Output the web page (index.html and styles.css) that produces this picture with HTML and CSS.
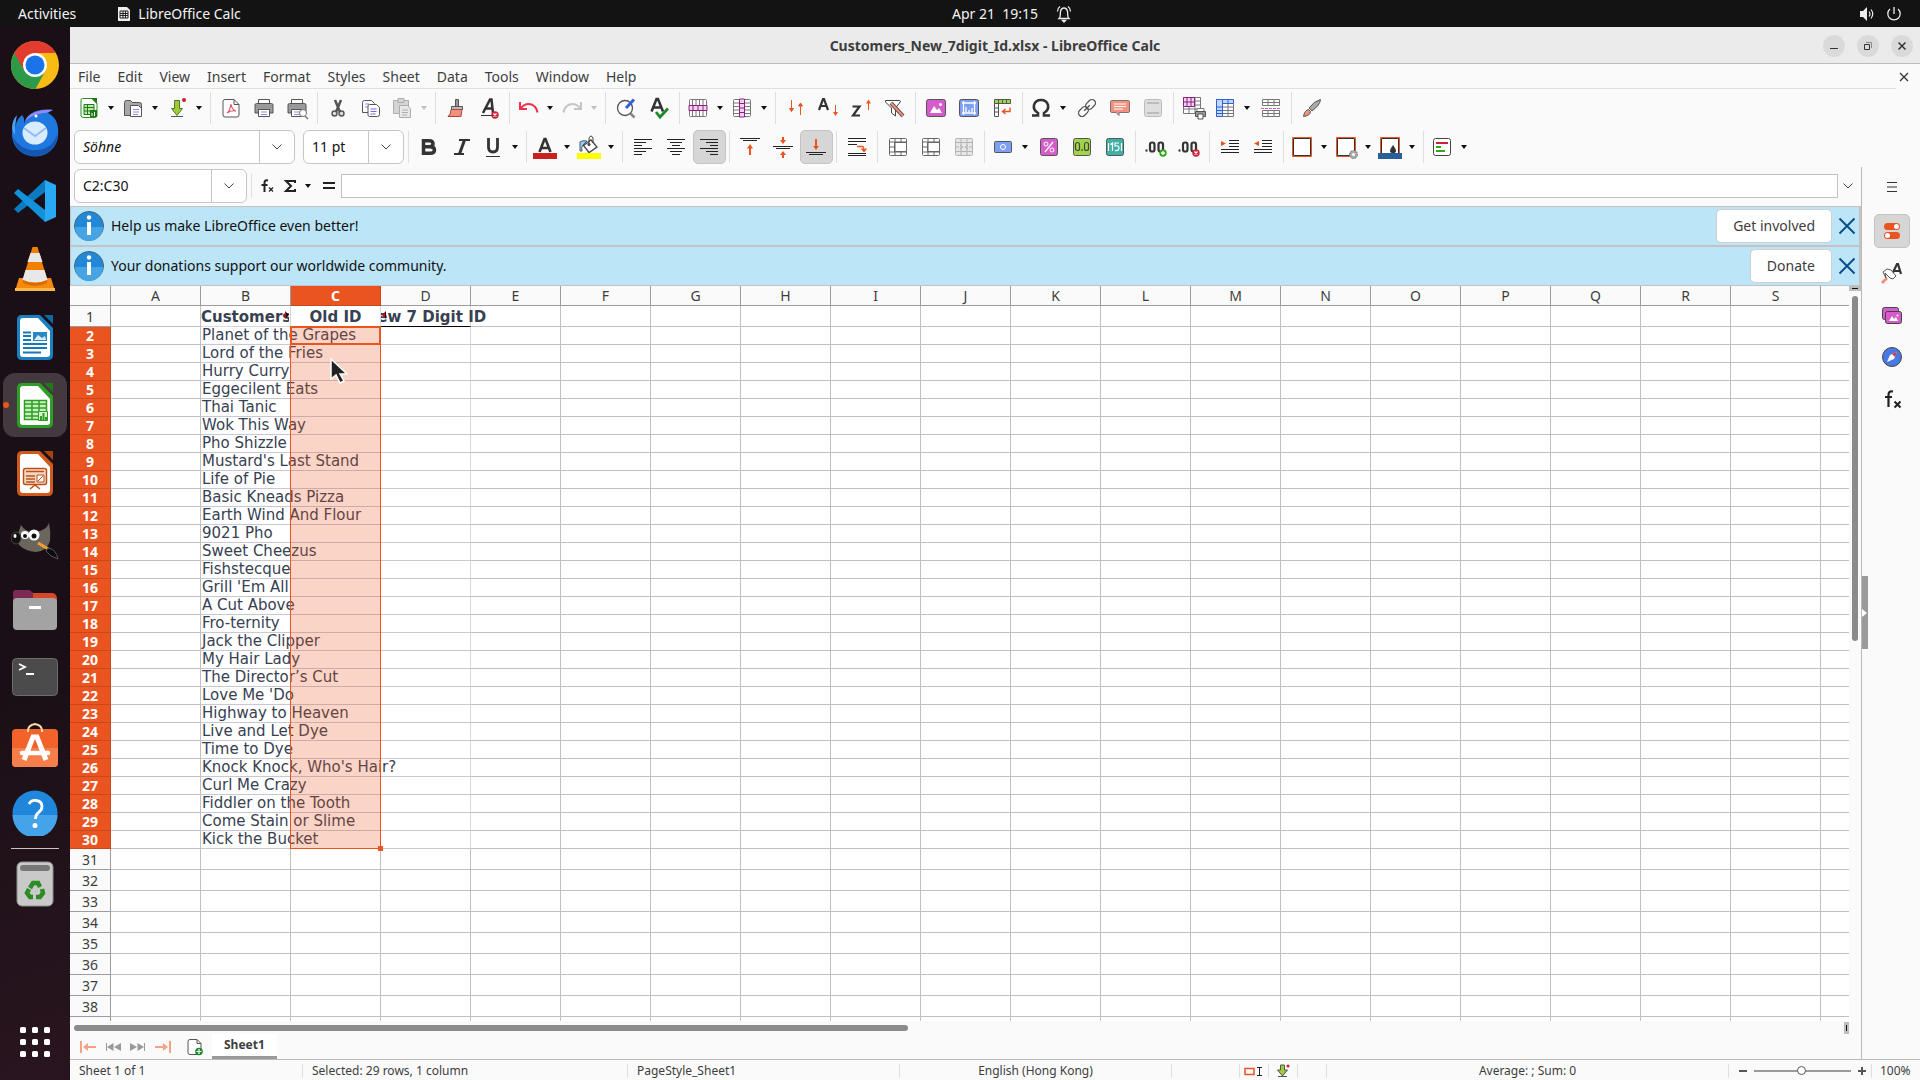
FILE: index.html
```html
<!DOCTYPE html>
<html lang="en">
<head>
    <meta charset="UTF-8">
    <meta name="viewport" content="width=device-width, initial-scale=1.0">
    <title>Customers_New_7digit_Id.xlsx - LibreOffice Calc</title>
    <link rel="stylesheet" href="styles.css">
</head>
<body>
    <!-- GNOME top bar -->
    <header class="topbar">
        <div class="topbar-left">
            <button class="plain">Activities</button>
            <button class="plain app-menu">
                <svg width="12" height="14" viewBox="0 0 12 14"><path d="M0 0h9l3 3v11H0z" fill="#eee"/><path d="M2 4h8v7H2zM2 6.500h8M2 8.500h8M5 4v7M7.500 4v7" fill="none" stroke="#222"/></svg>
                LibreOffice Calc
            </button>
        </div>
        <div class="topbar-center">
            <span>Apr 21&nbsp; 19:15</span>
            <svg width="16" height="18" viewBox="0 0 16 18" fill="none" stroke="#eee" stroke-width="1.300"><path d="M3 13.500c2-2 1-4 1.500-7C5 4 6 3 8 3s3 1 3.500 3.500c.5 3-.5 5 1.500 7zM1.500 6.500C1.500 4 2.500 2.500 4 1.500M14.500 6.500C14.500 4 13.500 2.500 12 1.500"/><path d="M6.500 15.500h3L8 17z" fill="#eee"/></svg>
        </div>
        <div class="topbar-right">
            <svg width="16" height="16" viewBox="0 0 16 16"><path d="M1 5h3l4-4v14l-4-4H1z" fill="#eee"/><path d="M10 5.500q2 2.500 0 5M12 3.500q3.500 4.500 0 9" fill="none" stroke="#eee" stroke-width="1.200"/></svg>
            <svg width="16" height="16" viewBox="0 0 16 16" fill="none" stroke="#eee" stroke-width="1.300"><path d="M4 3a6.200 6.200 0 1 0 8 0M8 1v7"/></svg>
        </div>
    </header>

    <div class="desktop">
        <!-- Dock -->
        <nav class="dock">
            <button class="dock-item" aria-label="Chrome">
                <svg width="48" height="48" viewBox="0 0 48 48"><circle cx="24" cy="24" r="24" fill="#f9bc15"/><path d="M24 24L3.200 12A24 24 0 0 0 24.500 48L34.400 30z" fill="#2c9a48"/><path d="M3.200 12A24 24 0 0 1 44.800 12H24L13.600 30z" fill="#e33b2e"/><circle cx="24" cy="24" r="12" fill="#fff"/><circle cx="24" cy="24" r="9.500" fill="#1a73e8"/></svg>
            </button>
            <button class="dock-item" aria-label="Thunderbird">
                <svg width="48" height="48" viewBox="0 0 48 48"><path d="M1 20q1 4 3 6Q3 12 11 6q3 3 2 9C16 4 26-1 42 1q-3 1-5 3c8 4 11 12 10 21a23 22 0 0 1-46 1z" fill="#1f78e0"/><path d="M2 28c6 10 14 14 24 13 10 0 18-7 20-16 1 14-10 22-22 22S3 38 2 28z" fill="#1456b0"/><path d="M14 12C18 4 28 0 42 1l-7 3c-6 0-14 2-21 8z" fill="#9a86f2"/><path d="M1 20q0-9 5-14-2 8-2 20-2-2-3-6z" fill="#4aa0f4"/><circle cx="25" cy="7" r="1.500" fill="#fff"/><ellipse cx="24" cy="24" rx="12.500" ry="11.500" fill="#d9ebff"/><path d="M13 19l11 8 11-8" fill="none" stroke="#8fbdf0" stroke-width="2"/></svg>
            </button>
            <button class="dock-item" aria-label="Visual Studio Code">
                <svg width="44" height="44" viewBox="0 0 44 44"><path d="M32 1L1 30l4 4 27-21z" fill="#0b7ac0"/><path d="M1 14l4-4 27 21v12z" fill="#1392dc"/><path d="M32 1l11 5v32l-11 5z" fill="#29a8f3"/></svg>
            </button>
            <button class="dock-item" aria-label="VLC">
                <svg width="42" height="46" viewBox="0 0 42 46"><path d="M5 32h32l4 13H1z" fill="#f58a0b"/><path d="M1 42h40v3H1z" fill="#ffb84a"/><path d="M18.500 1h5L34 36q-13 6-26 0z" fill="#f08000"/><path d="M16.500 7h9l3 9h-15zM11.500 24h19l3 10q-12 5-25 0z" fill="#e8e8e8"/><path d="M9 34q12 6 24 0v3q-12 6-24 0z" fill="#d96c00"/></svg>
            </button>
            <button class="dock-item" aria-label="LibreOffice Writer">
                <svg width="36" height="45" viewBox="0 0 36 45"><path d="M5 0h18l13 13v27q0 5-5 5H5q-5 0-5-5V5q0-5 5-5z" fill="#1b7fc0"/><path d="M27 0h9v9z" fill="#0d69a6"/><path d="M6 3h15l12 13v23q0 3-3 3H6q-3 0-3-3V6q0-3 3-3z" fill="#fff"/><path d="M6 17.500h8M6 21h8M6 25h8M6 29h24M6 33h24M6 37.500h18" stroke="#1879ba" stroke-width="2"/><path d="M16 17h14v9H16z" fill="#2b86c6"/><path d="M17 25l4-5 4 3 3-2 1 4z" fill="#d7ecf8"/></svg>
            </button>
            <button class="dock-item active" aria-label="LibreOffice Calc">
                <svg width="36" height="45" viewBox="0 0 36 45"><path d="M5 0h18l13 13v27q0 5-5 5H5q-5 0-5-5V5q0-5 5-5z" fill="#2f9e25"/><path d="M27 0h9v9z" fill="#1c7b15"/><path d="M6 3h15l12 13v23q0 3-3 3H6q-3 0-3-3V6q0-3 3-3z" fill="#fff"/><path d="M7.500 17.500h22v19h-22zM7.500 21h22M7.500 25h22M7.500 29h22M7.500 33h22M15 17v20M22 17v20" fill="#c9f0c0" stroke="#2f9e25" stroke-width="1.500"/><path d="M21.500 28.500h9v9h-9z" fill="#d8f5d0" stroke="#2f9e25"/><path d="M24 37v-4M26.500 37v-7M29 37v-3" stroke="#2f9e25" stroke-width="2"/></svg>
            </button>
            <button class="dock-item" aria-label="LibreOffice Impress">
                <svg width="36" height="45" viewBox="0 0 36 45"><path d="M5 0h18l13 13v27q0 5-5 5H5q-5 0-5-5V5q0-5 5-5z" fill="#cf5a1c"/><path d="M27 0h9v9z" fill="#a8430d"/><path d="M6 3h15l12 13v23q0 3-3 3H6q-3 0-3-3V6q0-3 3-3z" fill="#fff"/><rect x="6.500" y="17.500" width="23" height="16" rx="2" fill="#f8d8c4" stroke="#b9501a" stroke-width="1.500"/><path d="M9 25h9M9 28h9M9 31h9M9 20.500h18M13 38l5-4 5 4" fill="none" stroke="#b9501a" stroke-width="1.500"/><path d="M20 24h7v7h-7zM21 30l3-3 2-2" fill="#fff" stroke="#b9501a"/></svg>
            </button>
            <button class="dock-item" aria-label="GIMP">
                <svg width="48" height="40" viewBox="0 0 48 40"><path d="M10 4q5 8 14 7Q35 10 38 2q2 9 1 18-3 10-14 11Q14 30 8 24q-3-8 2-20z" fill="#6b665d"/><ellipse cx="5" cy="17" rx="5" ry="6" fill="#111" stroke="#444"/><ellipse cx="4" cy="15" rx="1.500" ry="2" fill="#fff"/><circle cx="14" cy="14" r="4" fill="#fff"/><circle cx="23" cy="14" r="5.500" fill="#fff"/><circle cx="14" cy="15" r="2" fill="#111"/><circle cx="23" cy="15" r="2.500" fill="#111"/><path d="M27 22l12 7" stroke="#f0a030" stroke-width="3"/><path d="M37 27q8 1 10 11-8-2-12-8z" fill="#0c0c0c" stroke="#555"/></svg>
            </button>
            <button class="dock-item" aria-label="Files">
                <svg width="46" height="42" viewBox="0 0 46 42"><path d="M1 6q0-4 4-4h12l4 3h19q4 0 5 5v6H1z" fill="#d6482b"/><path d="M1 6q0-4 4-4h12l4 3v8H1z" fill="#7c2a55"/><rect x="1" y="10" width="44" height="32" rx="4" fill="#a3a3a3"/><path d="M17 19.500h12" stroke="#fff" stroke-width="3"/></svg>
            </button>
            <button class="dock-item" aria-label="Terminal">
                <svg width="46" height="38" viewBox="0 0 46 38"><rect x=".5" y=".5" width="45" height="37" rx="4" fill="#4b4b4b" stroke="#6d6d6d"/><path d="M7 6l6 3-6 3M14 16h8" fill="none" stroke="#fff" stroke-width="1.800"/></svg>
            </button>
            <button class="dock-item" aria-label="Ubuntu Software">
                <svg width="46" height="44" viewBox="0 0 46 44"><rect y="6" width="46" height="38" rx="4" fill="#f2632c"/><path d="M0 25h46v15q0 4-4 4H4q-4 0-4-4z" fill="#f47f4b"/><path d="M16 9V8q0-6 7-7 7 1 7 7v1" fill="none" stroke="#f8d9a8" stroke-width="2"/><path d="M12 37l9-23h4l9 23" fill="none" stroke="#fff" stroke-width="5"/><path d="M10 30h26" stroke="#fff" stroke-width="4.500" stroke-linecap="round"/></svg>
            </button>
            <button class="dock-item" aria-label="Help">
                <svg width="46" height="46" viewBox="0 0 46 46"><circle cx="23" cy="23" r="22.500" fill="#1f86dc"/><path d="M.5 25h45A22.500 22.500 0 0 1 .5 25z" fill="#45a3ea"/><path d="M17 14q2-4 7-3.500 6 .5 6 6 0 3.500-3.500 6-3 2-3 6.500" fill="none" stroke="#fff" stroke-width="2.800"/><circle cx="23" cy="35.500" r="2.500" fill="#fff"/></svg>
            </button>
            <hr class="dock-sep">
            <button class="dock-item" aria-label="Trash">
                <svg width="38" height="46" viewBox="0 0 38 46"><rect x="1" y="1" width="36" height="44" rx="5" fill="#c9c9c9" stroke="#8d8d8d"/><rect x="4" y="4" width="30" height="6" rx="3" fill="#777"/><g fill="none" stroke="#2a8c22" stroke-width="4.500"><path d="M14 27l3-5h5l2 4"/><path d="M26 28l1 4-3 4h-4"/><path d="M17 36h-3l-3-4 2-4"/></g></svg>
            </button>
            <button class="dock-item apps" aria-label="Show Applications">
                <svg width="30" height="30" viewBox="0 0 30 30" fill="#fff"><rect width="6" height="6" rx="1.500"/><rect x="12" width="6" height="6" rx="1.500"/><rect x="24" width="6" height="6" rx="1.500"/><rect y="12" width="6" height="6" rx="1.500"/><rect x="12" y="12" width="6" height="6" rx="1.500"/><rect x="24" y="12" width="6" height="6" rx="1.500"/><rect y="24" width="6" height="6" rx="1.500"/><rect x="12" y="24" width="6" height="6" rx="1.500"/><rect x="24" y="24" width="6" height="6" rx="1.500"/></svg>
            </button>
        </nav>

        <div class="window">
            <div class="titlebar">
                <h1>Customers_New_7digit_Id.xlsx - LibreOffice Calc</h1>
                <div class="window-buttons">
                    <button aria-label="Minimize"><svg width="10" height="10" viewBox="0 0 10 10"><path d="M1 7.500h8" stroke="#333"/></svg></button>
                    <button aria-label="Restore"><svg width="10" height="10" viewBox="0 0 10 10" fill="none"><path d="M3 1.500h5.500V7" stroke="#888"/><path d="M1.500 3.500h5v5h-5z" stroke="#333"/></svg></button>
                    <button aria-label="Close"><svg width="10" height="10" viewBox="0 0 10 10"><path d="M1.500 1.500l7 7M8.500 1.500l-7 7" stroke="#333" stroke-width="1.500"/></svg></button>
                </div>
            </div>

            <div class="menubar">
                <nav class="menus">
                    <button>File</button><button>Edit</button><button>View</button><button>Insert</button><button>Format</button><button>Styles</button><button>Sheet</button><button>Data</button><button>Tools</button><button>Window</button><button>Help</button>
                </nav>
                <button class="doc-close" aria-label="Close document"><svg width="10" height="10" viewBox="0 0 10 10"><path d="M1 1l8 8M9 1l-8 8" stroke="#333" stroke-width="1.300"/></svg></button>
            </div>

            <!-- Standard toolbar -->
            <div class="toolbar">
                <div class="split"><button aria-label="New"><svg viewBox="0 0 24 24"><path d="M5.500 2.500H15l5 5v12q0 2-2 2H7q-3 0-3-2v-15q0-2 1.500-2z" fill="#fff" stroke="#2c8c22"/><path d="M14 2h6v6z" fill="#1e7b16"/><path d="M7 8.500h10v10H7zM7 11.500h10M7 15h10M10.500 8v10" fill="#b8e8a8" stroke="#1e7b16"/><path d="M13 14h7v7h-7z" fill="#1e7b16"/><path d="M15 20v-3M17.500 20v-4" stroke="#fff"/></svg></button><button class="drop" aria-label="New options"></button></div>
                <div class="split"><button aria-label="Open"><svg viewBox="0 0 24 24"><path d="M3.500 19.500v-13q0-2 2-2h4l2 2h7q2 0 2 2v11z" fill="#a8a8a8" stroke="#555"/><path d="M9.500 9.500h8l3 3v8h-11z" fill="#fff" stroke="#555"/><path d="M12 13.500h6M12 16h6M12 18.500h5" stroke="#8d8de0"/></svg></button><button class="drop" aria-label="Open options"></button></div>
                <div class="split"><button aria-label="Save"><svg viewBox="0 0 24 24"><path d="M9.500 4.500h5v8h3l-5.500 7-5.500-7h3z" fill="#9ccc3c" stroke="#557722"/><path d="M6 20.500h12" stroke="#555"/><circle cx="19" cy="4" r="2" fill="#d01c2e"/></svg></button><button class="drop" aria-label="Save options"></button></div>
                <i class="sep"></i>
                <button aria-label="Export as PDF"><svg viewBox="0 0 24 24"><path d="M6 3.500h9l5 5v10.500q0 2-2 2H6q-2 0-2-2v-13.500q0-2 2-2zM15 3.500v5h5" fill="#fff" stroke="#555"/><path d="M8 17q3-2 4-9 1 6 5 7-5-1-9 2z" fill="none" stroke="#e2536a" stroke-width="1.200"/></svg></button>
                <button aria-label="Print"><svg viewBox="0 0 24 24"><path d="M6.500 8V3.500h11V8" fill="#fff" stroke="#555"/><path d="M3 9q0-1.500 1.500-1.500h15q1.500 0 1.500 1.500v8H3z" fill="#9a9a9a" stroke="#555"/><path d="M6.500 13.500h11v7h-11z" fill="#fff" stroke="#555"/><path d="M9 16h6M9 18.500h6" stroke="#8d8de0"/></svg></button>
                <button aria-label="Print Preview"><svg viewBox="0 0 24 24"><path d="M6.500 8V3.500h11V8" fill="#fff" stroke="#555"/><path d="M3 9q0-1.500 1.500-1.500h15q1.500 0 1.500 1.500v8H3z" fill="#9a9a9a" stroke="#555"/><path d="M6.500 13.500h11v7h-11z" fill="#fff" stroke="#555"/><path d="M9 16h6M9 18.500h6" stroke="#8d8de0"/><circle cx="18" cy="17" r="3.500" fill="#fff" stroke="#777"/><path d="M20 20l3 3" stroke="#777" stroke-width="1.500"/></svg></button>
                <i class="sep"></i>
                <button aria-label="Cut"><svg viewBox="0 0 24 24" fill="none" stroke="#555" stroke-width="1.400"><path d="M9 4l5 12M15 4l-5 12" stroke-width="2.500"/><circle cx="8.500" cy="17.500" r="2.500" fill="#ddd"/><circle cx="15.500" cy="17.500" r="2.500" fill="#ddd"/></svg></button>
                <button aria-label="Copy"><svg viewBox="0 0 24 24"><path d="M5.500 4.500h7l3 3v9h-12v-10q0-2 2-2z" fill="#fff" stroke="#555"/><path d="M6 8h4M6 11h3" stroke="#8d8de0"/><path d="M10.500 8.500h7l3 3v7q0 2-2 2h-8q-1.500 0-1.500-2v-8.500q0-1.500 1.500-1.500z" fill="#fff" stroke="#555"/><path d="M11.500 13h6M11.500 15.500h6M11.500 18h5" stroke="#6f6fe0"/></svg></button>
                <div class="split"><button aria-label="Paste"><svg viewBox="0 0 24 24" fill="#d4d4d4" stroke="#adadad"><path d="M3.500 4.500h15v13h-15z"/><path d="M8 2.500h6v4H8z"/><path d="M9.500 9.500h8l3 3v9h-11z" fill="#e8e8e8"/><path d="M12 14h6M12 16.500h6M12 19h5"/></svg></button><button class="drop off" aria-label="Paste options"></button></div>
                <i class="sep"></i>
                <button aria-label="Clone Formatting"><svg viewBox="0 0 24 24"><path d="M11.500 3.500h3v7h-3z" fill="#999" stroke="#555"/><path d="M7.500 10.500h11v3h-11z" fill="#bbb" stroke="#555"/><path d="M7 13.500h11l-1 7H4q3-2 3-7z" fill="#f4907e" stroke="#a34b3d"/></svg></button>
                <button aria-label="Clear Direct Formatting"><svg viewBox="0 0 24 24"><path d="M6 17L13 3.500h1.500L16 17M8 12.500h8" fill="none" stroke="#333" stroke-width="2.500"/><path d="M4 19.500h12" stroke="#333"/><circle cx="18" cy="19" r="3.700" fill="#c9233c"/><path d="M16.500 17.500l3 3M19.500 17.500l-3 3" stroke="#fff" stroke-width="1.200"/></svg></button>
                <i class="sep"></i>
                <div class="split"><button aria-label="Undo"><svg viewBox="0 0 24 24" fill="none" stroke="#f0304c" stroke-width="2"><path d="M4 6v7h7M4.500 12.500q5-6 11-4 5 2 6 8"/></svg></button><button class="drop" aria-label="Undo history"></button></div>
                <div class="split"><button aria-label="Redo"><svg viewBox="0 0 24 24" fill="none" stroke="#c4c4c4" stroke-width="2"><path d="M21 6v7h-7M20.500 12.500q-5-6-11-4-5 2-6 8"/></svg></button><button class="drop off" aria-label="Redo history"></button></div>
                <i class="sep"></i>
                <button aria-label="Find and Replace"><svg viewBox="0 0 24 24"><circle cx="11" cy="12" r="7.500" fill="#fff" stroke="#555" stroke-width="1.300"/><path d="M16.500 17.500l4 4" stroke="#888" stroke-width="2.500"/><path d="M12 12l8-8.500" stroke="#2f62d8" stroke-width="3"/></svg></button>
                <button aria-label="Spelling"><svg viewBox="0 0 24 24" fill="none"><path d="M4.500 15.500L9.500 3h1.500l5 12.500M6.500 11.500h8" stroke="#333" stroke-width="2.500"/><path d="M9 16l4 5 8-8.500" stroke="#1c8a2a" stroke-width="2.800"/></svg></button>
                <i class="sep"></i>
                <div class="split"><button aria-label="Row"><svg viewBox="0 0 24 24" fill="#fff" stroke="#777"><rect x="3.500" y="3.500" width="17" height="17" rx="1"/><path d="M6.500 3v18M10 3v18M13.500 3v18M17 3v18"/><path d="M3 9.500h18v5H3z" fill="#f4d0f0" stroke="#8b2080"/><path d="M7 9v6M12 9v6M17 9v6" stroke="#8b2080"/></svg></button><button class="drop" aria-label="Row options"></button></div>
                <div class="split"><button aria-label="Column"><svg viewBox="0 0 24 24" fill="#fff" stroke="#777"><rect x="3.500" y="3.500" width="17" height="17" rx="1"/><path d="M3 7h18M3 10.500h18M3 14h18M3 17.500h18"/><path d="M9.500 3h5v18h-5z" fill="#f4d0f0" stroke="#8b2080"/><path d="M9 7.500h6M9 12h6M9 16.500h6" stroke="#8b2080"/></svg></button><button class="drop" aria-label="Column options"></button></div>
                <i class="sep"></i>
                <button aria-label="Sort"><svg viewBox="0 0 24 24" fill="#e95420" stroke="#e95420"><path d="M7.500 4v10M16.500 9v10"/><path d="M5.500 12.500h4l-2 3zM14.500 10h4l-2-3z"/></svg></button>
                <button aria-label="Sort Ascending"><svg viewBox="0 0 24 24" fill="none"><path d="M2 14L6 3h1l4 11M3.500 10h6" stroke="#333" stroke-width="2.200"/><path d="M18.500 9v9" stroke="#e95420"/><path d="M16 16h5l-2.500 4z" fill="#e95420"/></svg></button>
                <button aria-label="Sort Descending"><svg viewBox="0 0 24 24" fill="none"><path d="M2.500 10.500h7l-6.500 9h7" stroke="#333" stroke-width="2.200"/><path d="M18.500 6v8" stroke="#e95420"/><path d="M16 7.500h5l-2.500-4z" fill="#e95420"/></svg></button>
                <button aria-label="AutoFilter"><svg viewBox="0 0 24 24" fill="#fff" stroke="#444"><path d="M2.500 4.500h14q2 0 0 2.500l-4 5v8l-4-3v-5l-6-6z"/><path d="M8 7l12 13" stroke="#444" stroke-width="4"/><path d="M8 7l12 13" stroke="#f4907e" stroke-width="2"/></svg></button>
                <i class="sep"></i>
                <button aria-label="Image"><svg viewBox="0 0 24 24"><rect x="2.500" y="3.500" width="19" height="17" rx="2" fill="#d65bcb" stroke="#555"/><path d="M6 17l4-7 3 4 2-2 3 5z" fill="#fff"/><circle cx="16.500" cy="8.500" r="1.500" fill="#fff"/></svg></button>
                <button aria-label="Chart"><svg viewBox="0 0 24 24"><rect x="2.500" y="3.500" width="19" height="17" rx="2" fill="#7ba0f5" stroke="#555"/><path d="M5 7h14M5 17h14M6.500 5v14M17.500 5v14M9 16v-5M12 16v-2M15 16v-4" stroke="#fff" stroke-width="1.300"/></svg></button>
                <button aria-label="Pivot Table"><svg viewBox="0 0 24 24"><path d="M4.500 3.500h16v4h-16z" fill="#a2d44a" stroke="#555"/><path d="M8.500 3v5M12.500 3v5M16.500 3v5M4.500 7.500h4v13h-4zM4.500 12h4M4.500 16h4" fill="none" stroke="#555"/><path d="M13 15.500h7v-4M15.500 13l-3 2.500 3 2.500" fill="none" stroke="#e95420" stroke-width="1.400"/></svg></button>
                <i class="sep"></i>
                <div class="split"><button aria-label="Special Character"><svg viewBox="0 0 24 24" fill="none" stroke="#333" stroke-width="2.600"><path d="M3 19.500h6v-2.500Q4 14 5 9q1.500-5 7-5t7 5q1 5-4 8v2.500h6"/></svg></button><button class="drop" aria-label="Special characters"></button></div>
                <button aria-label="Hyperlink"><svg viewBox="0 0 24 24" fill="none" stroke="#555" stroke-width="1.300"><g transform="rotate(-45 12 12)"><rect x="1.500" y="8.500" width="11" height="7" rx="3.500"/><rect x="11.500" y="8.500" width="11" height="7" rx="3.500"/><path d="M8 12h8"/></g></svg></button>
                <button aria-label="Comment"><svg viewBox="0 0 24 24"><path d="M4 4.500h16q1.500 0 1.500 1.500v9q0 1.500-1.500 1.500h-9v3l-3-3H4q-1.500 0-1.500-1.500V6q0-1.500 1.500-1.500z" fill="#f4907e" stroke="#777"/><path d="M6 8h12M6 10.500h12M6 13h9" stroke="#fff"/></svg></button>
                <button aria-label="Headers and Footers"><svg viewBox="0 0 24 24"><rect x="3.500" y="3.500" width="17" height="17" rx="2" fill="#dedede" stroke="#bcbcbc"/><path d="M6 7h12M6 17h12" stroke="#bcbcbc" stroke-width="2"/></svg></button>
                <i class="sep"></i>
                <button aria-label="Define Print Area"><svg viewBox="0 0 24 24" fill="#fff" stroke="#777"><path d="M1.500 1.500h17v16h-17zM1.500 13h17M13 1v16M7 1v16M13 5h6M13 9h6"/><path d="M1.500 1.500h11v9h-11zM1.500 6h11M5 1.500v9M9 1.500v9" fill="#f4d0f0" stroke="#8b2080"/><path d="M15 12.500h7v3h-7z"/><path d="M13.500 15.500h10v5h-10z" fill="#999" stroke="#555"/><path d="M16 18h5v5h-5z" stroke="#555"/></svg></button>
                <div class="split"><button aria-label="Freeze Rows and Columns"><svg viewBox="0 0 24 24" fill="#fff" stroke="#777"><path d="M3.500 3.500h17v17h-17zM3 11h18M3 14.500h18M3 17.500h18M15 3v18"/><path d="M3.500 3.500h17v4h-11v13h-6zM3.500 11h6M3.500 14.500h6M3.500 17.500h6M9.500 3v5M15 3v4" fill="#c4d6fa" stroke="#2f62d8"/></svg></button><button class="drop" aria-label="Freeze options"></button></div>
                <button aria-label="Split Window"><svg viewBox="0 0 24 24" fill="#fff" stroke="#777"><path d="M3.500 3.500h17v6h-17zM3.500 14.500h17v6h-17zM3 6.500h18M3 17.500h18M9 3v6M15 3v6M9 15v6M15 15v6"/><path d="M2 12.500h20" stroke="#d65bcb" stroke-dasharray="3 1"/></svg></button>
                <i class="sep"></i>
                <button aria-label="Show Draw Functions"><svg viewBox="0 0 24 24"><path d="M9 12Q14 5 20.500 3.500 20 9 12 15z" fill="#aaa" stroke="#555"/><path d="M3.500 20.500q1-6 5-7l2 2q0 4-7 5z" fill="#f4907e" stroke="#555"/></svg></button>
            </div>

            <!-- Formatting toolbar -->
            <div class="toolbar">
                <div class="combo font-name"><input type="text" value="Söhne" aria-label="Font Name"><button class="chevron" aria-label="Font list"><svg width="12" height="8" viewBox="0 0 12 8"><path d="M1.500 1.500L6 6l4.500-4.500" fill="none" stroke="#444"/></svg></button></div>
                <div class="combo font-size"><input type="text" value="11 pt" aria-label="Font Size"><button class="chevron" aria-label="Size list"><svg width="12" height="8" viewBox="0 0 12 8"><path d="M1.500 1.500L6 6l4.500-4.500" fill="none" stroke="#444"/></svg></button></div>
                <i class="sep"></i>
                <button aria-label="Bold"><svg viewBox="0 0 24 24" fill="none" stroke="#333" stroke-width="3.500"><path d="M7 5.700h5q4 0 4 3t-4 3H7M7 11.700h6q4.500 0 4.500 3.300t-4.500 3.300H7M6.500 4v16"/></svg></button>
                <button aria-label="Italic"><svg viewBox="0 0 24 24" fill="none" stroke="#333" stroke-width="2"><path d="M9 5h11M4 19h10"/><path d="M14.500 5l-5 14" stroke-width="3"/></svg></button>
                <div class="split"><button aria-label="Underline"><svg viewBox="0 0 24 24" fill="none" stroke="#333"><path d="M7.500 3v9q0 5 4.500 5t4.500-5V3" stroke-width="2.800"/><path d="M5 21.500h14"/></svg></button><button class="drop" aria-label="Underline styles"></button></div>
                <i class="sep"></i>
                <div class="split"><button aria-label="Font Color"><svg viewBox="0 0 24 24"><path d="M6.500 17L11.500 4h1l5 13M8.500 13h7" fill="none" stroke="#333" stroke-width="2.600"/><path d="M0 18h24v6H0z" fill="#c9211e"/></svg></button><button class="drop" aria-label="Font colors"></button></div>
                <div class="split"><button aria-label="Highlighting"><svg viewBox="0 0 24 24"><path d="M3 16V7q2-2 7-1l-4 4q-2 2-1 6z" fill="#8fd0ec" stroke="#557"/><path d="M6.500 10.500L14 5l6 7-8 5.500z" fill="#fff" stroke="#444" stroke-width="1.300"/><path d="M12 10V3q2-4 4 0v5" fill="none" stroke="#444"/><circle cx="12" cy="9.500" r="1.500" fill="#444"/><path d="M0 18h24v6H0z" fill="#ff0"/></svg></button><button class="drop" aria-label="Highlight colors"></button></div>
                <i class="sep"></i>
                <button aria-label="Align Left"><svg viewBox="0 0 24 24" stroke="#222"><path d="M3 4.500h18M3 7.500h12M3 10.500h8M3 13.500h18M3 16.500h12M3 19.500h8"/></svg></button>
                <button aria-label="Center"><svg viewBox="0 0 24 24" stroke="#222"><path d="M3 4.500h18M6 7.500h12M8 10.500h8M3 13.500h18M6 16.500h12M8 19.500h8"/></svg></button>
                <button class="on" aria-label="Align Right"><svg viewBox="0 0 24 24" stroke="#222"><path d="M3 4.500h18M9 7.500h12M13 10.500h8M3 13.500h18M9 16.500h12M13 19.500h8"/></svg></button>
                <i class="sep"></i>
                <button aria-label="Align Top"><svg viewBox="0 0 24 24"><path d="M2 3.500h20M5 5.500h14" stroke="#222"/><path d="M12 12v8" stroke="#e95420" stroke-width="2"/><path d="M9 13.500h6L12 9z" fill="#e95420"/></svg></button>
                <button aria-label="Center Vertically"><svg viewBox="0 0 24 24"><path d="M2 11.500h20M5 13.500h14" stroke="#222"/><path d="M12 2v4M12 19v4" stroke="#e95420" stroke-width="2"/><path d="M9 5h6l-3 4zM9 20h6l-3-4z" fill="#e95420"/></svg></button>
                <button class="on" aria-label="Align Bottom"><svg viewBox="0 0 24 24"><path d="M2 17.500h20M5 19.500h14" stroke="#222"/><path d="M12 4v8" stroke="#e95420" stroke-width="2"/><path d="M9 11h6l-3 4z" fill="#e95420"/></svg></button>
                <i class="sep"></i>
                <button aria-label="Wrap Text"><svg viewBox="0 0 24 24" fill="none" stroke="#222"><path d="M3 3.500h18M3 6.500h18M3 9.500h9M3 18.500h18M3 20.500h18"/><path d="M12 11.500h5q2 0 2 4M16.500 13.500l2.500 3 2.500-3" stroke="#e95420" stroke-width="1.300"/></svg></button>
                <i class="sep"></i>
                <button aria-label="Merge and Center Cells"><svg viewBox="0 0 24 24" fill="#fff" stroke="#666"><rect x="3.500" y="3.500" width="17" height="17" rx="1"/><path d="M9 3v18M15 3v4M15 17v4M3 7h18M3 17h18M3 12h6M8.500 7.500h12v9h-12z"/></svg></button>
                <button aria-label="Merge Cells"><svg viewBox="0 0 24 24" fill="#fff" stroke="#666"><rect x="3.500" y="3.500" width="17" height="17" rx="1"/><path d="M9 3v18M15 3v4M15 17v4M3 7h18M3 17h18M3 12h6M8.500 7.500h12v9h-12z"/></svg></button>
                <button aria-label="Split Cells"><svg viewBox="0 0 24 24" fill="#e6e6e6" stroke="#b4b4b4"><rect x="3.500" y="3.500" width="17" height="17" rx="1"/><path d="M9 3v18M15 3v18M3 7.500h18M3 16.500h18M3 12h4M17 12h4M8 10l3 2-3 2M16 10l-3 2 3 2"/></svg></button>
                <i class="sep"></i>
                <div class="split"><button aria-label="Currency"><svg viewBox="0 0 24 24"><rect x="3.500" y="6.500" width="17" height="11" rx="1" fill="#7ba0f5" stroke="#555"/><circle cx="12" cy="12" r="2.500" fill="none" stroke="#fff"/></svg></button><button class="drop" aria-label="Currency formats"></button></div>
                <button aria-label="Percent"><svg viewBox="0 0 24 24"><rect x="3.500" y="3.500" width="17" height="17" rx="2" fill="#d65bcb" stroke="#555"/><path d="M16 7L8 17" stroke="#fff" stroke-width="1.300"/><circle cx="9" cy="9" r="2" fill="none" stroke="#fff"/><circle cx="15" cy="15" r="2" fill="none" stroke="#fff"/></svg></button>
                <button aria-label="Number"><svg viewBox="0 0 24 24"><rect x="3.500" y="3.500" width="17" height="17" rx="2" fill="#a2d44a" stroke="#555"/><g fill="none" stroke="#444" stroke-width="1.200"><rect x="5.500" y="7.500" width="4" height="8" rx="2"/><rect x="14.500" y="7.500" width="4" height="8" rx="2"/><path d="M12 14v2"/></g></svg></button>
                <button aria-label="Date"><svg viewBox="0 0 24 24"><rect x="3.500" y="3.500" width="17" height="17" rx="2" fill="#3fb0a6" stroke="#555"/><path d="M5.500 8v8M7.500 9.500l2-1.500v8M16 8h-4v3q4-1 4 2t-4 2.500M18.500 8v8" fill="none" stroke="#fff" stroke-width="1.200"/></svg></button>
                <i class="sep"></i>
                <button aria-label="Add Decimal Place"><svg viewBox="0 0 24 24"><g fill="none" stroke="#333" stroke-width="2.200"><rect x="6" y="7.500" width="4.500" height="9" rx="2"/><rect x="14.500" y="7.500" width="4.500" height="9" rx="2"/><path d="M1.500 15.500h2"/></g><circle cx="19" cy="18" r="3.700" fill="#35a51c"/><path d="M17 18h4M19 16v4" stroke="#fff" stroke-width="1.300"/></svg></button>
                <button aria-label="Delete Decimal Place"><svg viewBox="0 0 24 24"><g fill="none" stroke="#333" stroke-width="2.200"><rect x="6" y="7.500" width="4.500" height="9" rx="2"/><rect x="14.500" y="7.500" width="4.500" height="9" rx="2"/><path d="M1.500 15.500h2"/></g><circle cx="19" cy="18" r="3.700" fill="#c9233c"/><path d="M17.500 16.500l3 3M20.500 16.500l-3 3" stroke="#fff" stroke-width="1.200"/></svg></button>
                <i class="sep"></i>
                <button aria-label="Increase Indent"><svg viewBox="0 0 24 24" stroke="#222"><path d="M11 5.500h10M11 8.500h10M11 11.500h10M3 14.500h18M3 17.500h18"/><path d="M3 6v5l5-2.500z" fill="#e95420" stroke="none"/></svg></button>
                <button aria-label="Decrease Indent"><svg viewBox="0 0 24 24" stroke="#222"><path d="M11 5.500h10M11 8.500h10M11 11.500h10M3 14.500h18M3 17.500h18"/><path d="M8 6v5L3 8.500z" fill="#e95420" stroke="none"/></svg></button>
                <i class="sep"></i>
                <div class="split"><button aria-label="Borders"><svg viewBox="0 0 24 24" fill="#fff"><path d="M2.500 2.500h19v19h-19z" stroke="#e95420"/><path d="M3.500 3.500h17v17h-17z" stroke="#333"/></svg></button><button class="drop" aria-label="Border types"></button></div>
                <div class="split"><button aria-label="Border Style"><svg viewBox="0 0 24 24" fill="#fff"><path d="M2.500 2.500h19v19h-19z" stroke="#e95420"/><path d="M3.500 3.500h17v17h-17z" stroke="#333"/><circle cx="19.500" cy="19.500" r="4" fill="#aaa"/><circle cx="19.500" cy="19.500" r="4" fill="none" stroke="#777" stroke-dasharray="2 1"/><circle cx="19.500" cy="19.500" r="1.500"/></svg></button><button class="drop" aria-label="Border styles"></button></div>
                <div class="split"><button aria-label="Border Color"><svg viewBox="0 0 24 24" fill="#fff"><path d="M2.500 2.500h19v19h-19z" stroke="#e95420"/><path d="M3.500 3.500h17v17h-17z" stroke="#333"/><path d="M15 10q6 8 0 8t0-8z" fill="#333"/><path d="M0 18h24v6H0z" fill="#2a6099"/></svg></button><button class="drop" aria-label="Border colors"></button></div>
                <i class="sep"></i>
                <div class="split"><button aria-label="Conditional"><svg viewBox="0 0 24 24"><rect x="3.500" y="3.500" width="17" height="17" rx="2" fill="#fff" stroke="#444"/><path d="M6 8h12" stroke="#c9233c" stroke-width="2"/><path d="M6 12h5M6 16h9" stroke="#35a51c" stroke-width="2"/></svg></button><button class="drop" aria-label="Conditional formats"></button></div>
            </div>

            <div class="workspace">
                <main class="document">
                    <div class="formula-bar">
                        <div class="combo name-box"><input type="text" value="C2:C30" aria-label="Name Box"><button class="chevron" aria-label="Manage names"><svg width="12" height="8" viewBox="0 0 12 8"><path d="M1.500 1.500L6 6l4.500-4.500" fill="none" stroke="#444"/></svg></button></div>
                        <i class="sep"></i>
                        <button class="fx" aria-label="Function Wizard"><svg viewBox="0 0 24 24" fill="none" stroke="#222"><path d="M12 6.500Q8.500 5.500 8.500 9v9M5.500 11h6" stroke-width="2"/><path d="M13 13.500l4 4M17 13.500l-4 4" stroke-width="1.300"/></svg></button>
                        <div class="split sum"><button aria-label="Select Function"><svg viewBox="0 0 24 24" fill="none" stroke="#222" stroke-width="2"><path d="M17 9V7H8l5 5-5 5h9v-2"/></svg></button><button class="drop" aria-label="Functions"></button></div>
                        <button class="equals" aria-label="Formula"><svg viewBox="0 0 24 24" stroke="#222" stroke-width="2"><path d="M6 9h12M6 14h12"/></svg></button>
                        <input type="text" class="formula-input" aria-label="Input line">
                        <button class="expand" aria-label="Expand Formula Bar"><svg class="auto" width="12" height="8" viewBox="0 0 12 8"><path d="M1.500 1.500L6 6l4.500-4.500" fill="none" stroke="#444"/></svg></button>
                    </div>

                    <div class="infobar">
                        <svg width="30" height="30" viewBox="0 0 30 30"><circle cx="15" cy="15" r="14.500" fill="#2287d6" stroke="#467"/><path d="M1 16h28a14 14 0 0 1-28 0z" fill="#46a4e4"/><path d="M15 11v13" stroke="#fff" stroke-width="4"/><circle cx="15" cy="6.500" r="2.200" fill="#fff"/></svg>
                        <p>Help us make LibreOffice even better!</p>
                        <button class="action">Get involved</button>
                        <button class="info-close" aria-label="Close infobar"><svg width="18" height="18" viewBox="0 0 18 18"><path d="M1.500 1.500l15 15M16.500 1.500l-15 15" stroke="#0b4f8a" stroke-width="2"/></svg></button>
                    </div>
                    <div class="infobar">
                        <svg width="30" height="30" viewBox="0 0 30 30"><circle cx="15" cy="15" r="14.500" fill="#2287d6" stroke="#467"/><path d="M1 16h28a14 14 0 0 1-28 0z" fill="#46a4e4"/><path d="M15 11v13" stroke="#fff" stroke-width="4"/><circle cx="15" cy="6.500" r="2.200" fill="#fff"/></svg>
                        <p>Your donations support our worldwide community.</p>
                        <button class="action">Donate</button>
                        <button class="info-close" aria-label="Close infobar"><svg width="18" height="18" viewBox="0 0 18 18"><path d="M1.500 1.500l15 15M16.500 1.500l-15 15" stroke="#0b4f8a" stroke-width="2"/></svg></button>
                    </div>

                    <div class="sheet-area">
                        <div class="grid">
                            <table id="sheet"></table>
                            <div class="selection"><span class="active-cell"></span><span class="fill-handle"></span></div>
                            <svg class="cursor" width="18" height="27" viewBox="0 0 18 27"><path d="M1 1v20l5-4 4 8 4-2-4-7h7z" fill="#222" stroke="#fff" stroke-width="1.500"/></svg>
                        </div>
                        <div class="vscroll"><span class="split-handle"></span><span class="thumb"></span></div>
                    </div>
                    <div class="hscroll"><span class="thumb"></span><span class="split-handle"></span></div>

                    <div class="sheet-tabs">
                        <button aria-label="First sheet"><svg width="16" height="12" viewBox="0 0 16 12"><path d="M1 0v12M5 6h11" stroke="#f4a184" stroke-width="2"/><path d="M3 6l5-4v8z" fill="#f4a184"/></svg></button>
                        <button aria-label="Previous sheet"><svg width="16" height="12" viewBox="0 0 16 12"><path d="M1 2h1v8H1zM8.500 2v8L2 6zM16 2v8L9 6z" fill="#999"/></svg></button>
                        <button aria-label="Next sheet"><svg width="16" height="12" viewBox="0 0 16 12"><path d="M14 2h1v8h-1zM7.500 2v8L14 6zM0 2v8l7-4z" fill="#999"/></svg></button>
                        <button aria-label="Last sheet"><svg width="16" height="12" viewBox="0 0 16 12"><path d="M15 0v12M0 6h11" stroke="#f4a184" stroke-width="2"/><path d="M13 6L8 2v8z" fill="#f4a184"/></svg></button>
                        <button class="add-sheet" aria-label="Add sheet"><svg width="16" height="18" viewBox="0 0 16 18"><path d="M3 1.500h7l4 4v9q0 2-2 2H3q-2 0-2-2v-11q0-2 2-2zM10 1.500v4h4" fill="#fff" stroke="#555"/><circle cx="12" cy="13.500" r="3.800" fill="#1c8a2a"/><path d="M9.500 13.500h5M12 11v5" stroke="#fff" stroke-width="1.200"/></svg></button>
                        <button class="tab">Sheet1</button>
                    </div>
                </main>

                <aside class="sidebar">
                    <button class="deck-menu" aria-label="Sidebar Settings"><svg width="12" height="12" viewBox="0 0 12 12" stroke="#333"><path d="M1 1.500h10M1 6h10M1 10.500h10"/></svg></button>
                    <button class="on" aria-label="Properties"><svg viewBox="0 0 24 24" fill="#e95420"><rect x="4" y="4" width="16" height="7" rx="3.500"/><rect x="4" y="13" width="16" height="7" rx="3.500"/><circle cx="16.500" cy="7.500" r="2.500" fill="#fff"/><circle cx="7.500" cy="16.500" r="2.500" fill="#fff"/></svg></button>
                    <button aria-label="Styles"><svg viewBox="0 0 24 24" fill="none"><path d="M12.500 12.500L17 3h1l3 10M14 10h7" stroke="#333" stroke-width="2.200"/><path d="M2 22l5-5" stroke="#f4907e" stroke-width="3"/><path d="M3 11l4-3 4 1 5 6-3 3-3-1-5-5 1 5z" fill="#fff" stroke="#555"/></svg></button>
                    <button aria-label="Gallery"><svg viewBox="0 0 24 24"><rect x="2.500" y="4.500" width="16" height="12" rx="2" fill="#d65bcb" stroke="#444"/><rect x="5.500" y="8.500" width="16" height="12" rx="2" fill="#d65bcb" stroke="#444"/><path d="M9 18l3-5 2 3 2-2 2 4z" fill="#fff"/><circle cx="17.500" cy="12.500" r="1" fill="#fff"/></svg></button>
                    <button aria-label="Navigator"><svg viewBox="0 0 24 24"><circle cx="12" cy="12" r="9.500" fill="#4878e4" stroke="#444"/><path d="M17 7l-3 7-7 3 3-7z" fill="#fff"/><path d="M17 7l-5 2 3 3z" fill="#d33"/></svg></button>
                    <button aria-label="Functions"><svg viewBox="0 0 24 24" fill="none" stroke="#222"><path d="M13 4.500Q8.500 3.500 8.500 8v12M5 10h7" stroke-width="2.200"/><path d="M14.500 14.500l6 6M20.500 14.500l-6 6" stroke-width="2"/></svg></button>
                    <span class="sidebar-handle"></span>
                </aside>
            </div>

            <footer class="statusbar">
                <span class="st-sheet">Sheet 1 of 1</span>
                <span class="st-selected">Selected: 29 rows, 1 column</span>
                <span class="st-style">PageStyle_Sheet1</span>
                <span class="st-lang">English (Hong Kong)</span>
                <span class="st-insert"></span>
                <span class="st-icon"><svg width="20" height="12" viewBox="0 0 20 12" fill="none"><path d="M1 3.500h9v6H1z" stroke="#e95420" stroke-width="1.500"/><path d="M13 2.500h5M13 10.500h5M15.500 2.500v8" stroke="#222"/></svg></span>
                <span class="st-icon"><svg width="14" height="14" viewBox="0 0 14 14"><path d="M4.500 1h4v5h3l-5 6-5-6h3z" fill="#9ccc3c" stroke="#555"/><path d="M2 12.500h9" stroke="#555"/><circle cx="12" cy="2" r="1.500" fill="#d01c2e"/></svg></span>
                <span class="st-icon"></span>
                <span class="st-sum">Average: ; Sum: 0</span>
                <span class="st-zoom">
                    <button aria-label="Zoom out"><svg width="8" height="8" viewBox="0 0 8 8"><path d="M0 4h8" stroke="#555" stroke-width="2"/></svg></button>
                    <input type="range" min="0" max="100" value="49" aria-label="Zoom">
                    <button aria-label="Zoom in"><svg width="8" height="8" viewBox="0 0 8 8"><path d="M0 4h8M4 0v8" stroke="#555" stroke-width="2"/></svg></button>
                </span>
                <span class="st-percent">100%</span>
            </footer>
        </div>
    </div>

    <script src="sheet.js"></script>
</body>
</html>
```
FILE: styles.css
```css
* {
    box-sizing: border-box;
}

body {
    margin: 0;
    height: 100vh;
    display: flex;
    flex-direction: column;
    overflow: hidden;
    font-family: "Noto Sans", sans-serif;
    font-size: 14px;
    line-height: 20px;
    color: #3d3d3d;
    background: #fafafa;
}

button,
input {
    font: inherit;
    color: inherit;
    margin: 0;
}

button {
    display: flex;
    align-items: center;
    justify-content: center;
    padding: 0;
    border: 0;
    background: none;
}

svg {
    display: block;
    flex: none;
}

/* Top bar */
.topbar {
    display: grid;
    grid-template-columns: 1fr auto 1fr;
    align-items: center;
    height: 27px;
    padding: 0 18px;
    background: #131313;
    color: #f2f2f2;
    flex: none;
}

.topbar-left,
.topbar-center,
.topbar-right {
    display: flex;
    align-items: center;
}

.topbar-left {
    gap: 42px;
}

.app-menu {
    gap: 8px;
}

.topbar-center {
    gap: 18px;
    padding-left: 104px;
}

.topbar-right {
    gap: 11px;
    justify-content: flex-end;
}

.desktop {
    flex: 1;
    display: flex;
    min-height: 0;
}

/* Dock */
.dock {
    flex: none;
    width: 70px;
    display: flex;
    flex-direction: column;
    align-items: center;
    gap: 4px;
    padding: 6px 0;
    background: linear-gradient(160deg, #1a0f16 60%, #29151f);
}

.dock-item {
    position: relative;
    flex: none;
    width: 64px;
    height: 64px;
    border-radius: 12px;
}

.dock-item.active {
    background: #433a40;
}

.dock-item.active::before {
    content: "";
    position: absolute;
    left: 0;
    width: 6px;
    height: 6px;
    border-radius: 50%;
    background: #e95420;
}

.dock-sep {
    flex: none;
    width: 48px;
    height: 1px;
    margin: -1px 0;
    border: 0;
    background: #c9c4c7;
}

.dock-item.apps {
    margin-top: auto;
}

.window {
    flex: 1;
    min-width: 0;
    display: flex;
    flex-direction: column;
    background: #fafafa;
}

/* Title bar */
.titlebar {
    flex: none;
    position: relative;
    display: flex;
    align-items: center;
    justify-content: center;
    height: 37px;
    padding-top: 1px;
    background: #ebebeb;
    border-bottom: 1px solid #bdbdbd;
}

.titlebar h1 {
    margin: 0;
    font-size: 14px;
    font-weight: bold;
}

.window-buttons {
    position: absolute;
    right: 7px;
    display: flex;
    gap: 12px;
}

.window-buttons button {
    width: 22px;
    height: 22px;
    border-radius: 50%;
    background: #dadada;
}

/* Menu bar */
.menubar {
    flex: none;
    display: flex;
    height: 25px;
    padding-right: 8px;
}

.menus {
    flex: 1;
    display: flex;
    gap: 17px;
    padding: 2px 0 0 8px;
    border-bottom: 1px solid #dedede;
}

.doc-close {
    width: 16px;
}

/* Toolbars */
.toolbar {
    flex: none;
    display: flex;
    align-items: center;
    height: 39px;
    padding: 0 0 1px 5px;
}

.toolbar > button {
    width: 33px;
    height: 34px;
    padding-right: 1px;
}

.toolbar svg,
.formula-bar button svg,
.sidebar svg {
    width: 24px;
    height: 24px;
}

.split {
    flex: none;
    display: flex;
    width: 44px;
    height: 34px;
}

.split button {
    width: 28px;
}

.split .drop {
    width: 16px;
}

.drop::after {
    content: "";
    border: 3px solid transparent;
    border-top: 4px solid #111;
    border-bottom: 0;
}

.drop.off::after {
    border-top-color: #c0c0c0;
}

.on {
    border: 1px solid #c4c4c4;
    border-radius: 5px;
    background: #d6d6d6;
}

.sep {
    flex: none;
    width: 1px;
    height: 32px;
    margin: 0 4px 0 3px;
    background: #dedede;
}

.combo {
    flex: none;
    display: flex;
    height: 34px;
    border: 1px solid #c6c6c6;
    border-radius: 6px;
    background: #fff;
    overflow: hidden;
    color: #111;
}

.combo input {
    flex: 1;
    min-width: 0;
    padding: 0 8px;
    border: 0;
    background: none;
}

.combo .chevron {
    width: 35px;
    border-left: 1px solid #c6c6c6;
}

.combo .chevron svg,
.formula-bar .chevron svg,
.formula-bar svg.auto {
    width: 12px;
    height: 8px;
}

.font-name {
    width: 221px;
    margin: 0 8px 0 -1px;
}

.font-name input {
    font-style: italic;
}

.font-size {
    width: 101px;
    margin-right: 1px;
}

/* Formula bar, infobars and sheet sit left of the sidebar */
.workspace {
    flex: 1;
    display: flex;
    min-height: 0;
}

.document {
    flex: 1;
    min-width: 0;
    display: flex;
    flex-direction: column;
    border-right: 1px solid #b9b9b9;
}

.formula-bar {
    flex: none;
    display: flex;
    align-items: center;
    height: 39px;
    padding: 0 0 1px 4px;
}

.name-box {
    width: 173px;
    margin-right: 1px;
}

.formula-bar .sep {
    height: 24px;
}

.formula-bar .fx,
.formula-bar .equals {
    width: 24px;
}

.formula-bar .sum {
    width: 36px;
    margin-right: 1px;
}

.formula-bar .sum button {
    width: 20px;
}

.formula-bar .sum .drop {
    width: 16px;
}

.formula-input {
    flex: 1;
    min-width: 0;
    height: 24px;
    border: 1px solid #c0c0c0;
    border-radius: 0;
    background: #fff;
}

.formula-bar .expand {
    width: 23px;
    padding-right: 4px;
}

/* Infobars */
.infobar {
    flex: none;
    display: flex;
    align-items: center;
    height: 40px;
    padding: 0 1px 0 3px;
    border: 1px solid #c3c3c3;
    border-right-width: 2px;
    background: #bce5f7;
    color: #111;
}

.infobar p {
    flex: 1;
    margin: 0 7px;
}

.infobar .action {
    height: 34px;
    padding: 0 16px;
    border: 1px solid #cfcfcf;
    border-radius: 5px;
    background: #fff;
    color: #3d3d3d;
}

.info-close {
    width: 26px;
    padding-left: 3px;
}

/* Sheet */
.sheet-area {
    flex: 1;
    display: flex;
    min-height: 0;
}

.grid {
    flex: 1;
    min-width: 0;
    position: relative;
    overflow: hidden;
    background: #fff;
}

#sheet {
    width: 100%;
    table-layout: fixed;
    border-collapse: separate;
    border-spacing: 0;
}

#sheet th,
#sheet td {
    padding: 0;
    height: 21px;
    border-right: 1px solid #c0c0c0;
    border-bottom: 1px solid #c0c0c0;
    font-weight: normal;
    line-height: 17px;
    white-space: nowrap;
}

#sheet th {
    background: #fafafa;
    border-color: #9c9c9c;
    color: #3d3d3d;
}

#sheet thead th {
    height: 20px;
}

#sheet .compact th,
#sheet .compact td {
    height: 18px;
}

#sheet th.picked {
    background: #e95420;
    border-color: #c8481b;
    color: #fff;
    font-weight: bold;
}

#sheet .col-head {
    width: 90px;
}

#sheet .corner {
    width: 41px;
}

#sheet .last {
    border-right: 0;
}

#sheet td {
    font-family: "DejaVu Sans", sans-serif;
    font-size: 15px;
    color: #374151;
}

#sheet .compact td {
    vertical-align: top;
}

#sheet .data {
    border-color: #d9d7e6;
}

#sheet .compact .data {
    border-bottom-color: #c9c7d6;
}

#sheet td.name {
    padding-left: 1px;
}

#sheet td.title {
    font-weight: bold;
    border-color: #d9d7e6;
}

#sheet td.title div {
    display: flex;
    justify-content: center;
    height: 20px;
    padding-top: 2px;
    align-items: center;
    position: relative;
}

#sheet td.clip-end div {
    justify-content: flex-start;
    overflow: hidden;
    width: 88px;
}

#sheet td.clip-start {
    border-bottom-color: #000;
}

/* text spills to the right but is cut at the left edge of the cell */
#sheet td.clip-start div {
    clip-path: inset(0 -40px 0 0);
}

/* overflow arrows */
#sheet .clip-end div::after,
#sheet .clip-start div::after {
    content: "";
    position: absolute;
    top: 5px;
    right: 0;
    width: 4px;
    height: 8px;
    background: linear-gradient(90deg, #e00000 1px, #111 1px);
    clip-path: polygon(0 0, 100% 50%, 0 100%);
}

#sheet .clip-start div::after {
    left: 1px;
    right: auto;
    background: linear-gradient(90deg, #e00000 3px, #111 3px);
    clip-path: polygon(100% 0, 0 50%, 100% 100%);
}

.selection {
    position: absolute;
    left: 220px;
    top: 40px;
    width: 91px;
    height: 523px;
    border: 1px solid #e95420;
    background: rgba(233, 84, 32, 0.25);
}

.active-cell {
    position: absolute;
    inset: -1px -1px auto -1px;
    height: 19px;
    border: 2px solid #e95420;
}

.fill-handle {
    position: absolute;
    right: -3px;
    bottom: -3px;
    width: 5px;
    height: 5px;
    background: #e95420;
}

.cursor {
    position: absolute;
    left: 260px;
    top: 72px;
}

/* Scroll bars */
.vscroll {
    flex: none;
    display: flex;
    flex-direction: column;
    align-items: center;
    gap: 5px;
    width: 12px;
}

.vscroll .thumb {
    width: 6px;
    height: 47%;
    border-radius: 3px;
    background: #8b8b8b;
}

.vscroll .split-handle {
    width: 12px;
    height: 5px;
    border: solid #bdbdbd;
    border-width: 2px 3px;
    background: #111;
}

.hscroll {
    flex: none;
    display: flex;
    align-items: center;
    justify-content: space-between;
    height: 13px;
    padding: 0 12px 0 4px;
}

.hscroll .thumb {
    width: 47%;
    height: 6px;
    border-radius: 3px;
    background: #8b8b8b;
}

.hscroll .split-handle {
    width: 5px;
    height: 12px;
    border: solid #bdbdbd;
    border-width: 3px 2px;
    background: #111;
}

/* Sheet tabs */
.sheet-tabs {
    flex: none;
    display: flex;
    align-items: center;
    gap: 9px;
    height: 25px;
    padding-left: 10px;
}

.add-sheet {
    margin-left: 7px;
}

.sheet-tabs .tab {
    height: 25px;
    padding: 0 12px;
    border-bottom: 3px solid #9a9a9a;
    background: #fff;
    font-size: 12px;
    font-weight: bold;
}

/* Sidebar */
.sidebar {
    flex: none;
    position: relative;
    display: flex;
    flex-direction: column;
    align-items: center;
    gap: 8px;
    width: 58px;
    padding-left: 2px;
}

.sidebar > button {
    width: 36px;
    height: 34px;
}

.sidebar .deck-menu {
    height: 39px;
}

.sidebar .deck-menu svg {
    width: 12px;
    height: 12px;
}

.sidebar-handle {
    position: absolute;
    left: 0;
    top: 409px;
    width: 6px;
    height: 73px;
    background: #9a9a9a;
}

.sidebar-handle::after {
    content: "";
    position: absolute;
    top: 33px;
    left: 0;
    border: 4px solid transparent;
    border-left: 5px solid #fff;
    border-right: 0;
}

/* Status bar */
.statusbar {
    flex: none;
    display: flex;
    align-items: center;
    height: 21px;
    padding-top: 1px;
    border-top: 1px solid #b9b9b9;
    font-size: 12px;
    line-height: 14px;
    white-space: nowrap;
}

.statusbar > span {
    display: flex;
    align-items: center;
    height: 14px;
    padding-left: 9px;
    border-left: 1px solid #dedede;
}

.statusbar .st-sheet {
    width: 232px;
    border-left: 0;
}

.st-selected {
    width: 325px;
}

.st-style {
    width: 272px;
}

.statusbar .st-lang {
    width: 272px;
    justify-content: center;
    padding: 0;
}

.st-insert {
    width: 68px;
}

.statusbar .st-icon {
    width: 29px;
    padding: 0;
    justify-content: center;
}

.statusbar .st-sum {
    flex: 1;
    padding: 0;
    justify-content: center;
}

.statusbar .st-zoom {
    gap: 7px;
    width: 143px;
    padding-left: 10px;
}

.st-zoom input {
    width: 97px;
    height: 14px;
    appearance: none;
    background: linear-gradient(#9a9a9a, #9a9a9a) center / 100% 2px no-repeat;
}

.st-zoom input::-webkit-slider-thumb {
    appearance: none;
    width: 9px;
    height: 9px;
    border: 1px solid #555;
    border-radius: 50%;
    background: #fff;
}

.statusbar .st-percent {
    width: 49px;
    padding-left: 8px;
}
```
FILE: sheet.js
```js
const customers = [
    "Planet of the Grapes", "Lord of the Fries", "Hurry Curry", "Eggecilent Eats",
    "Thai Tanic", "Wok This Way", "Pho Shizzle", "Mustard's Last Stand",
    "Life of Pie", "Basic Kneads Pizza", "Earth Wind And Flour", "9021 Pho",
    "Sweet Cheezus", "Fishstecque", "Grill 'Em All", "A Cut Above",
    "Fro-ternity", "Jack the Clipper", "My Hair Lady", "The Director’s Cut",
    "Love Me 'Do", "Highway to Heaven", "Live and Let Dye", "Time to Dye",
    "Knock Knock, Who's Hair?", "Curl Me Crazy", "Fiddler on the Tooth",
    "Come Stain or Slime", "Kick the Bucket"
];
const columns = "ABCDEFGHIJKLMNOPQRS".split("");
const titles = { B: ["Customers", "clip-end"], C: ["Old ID", ""], D: ["New 7 Digit ID", "clip-start"] };

const sheet = document.getElementById("sheet");

let html = '<thead><tr><th class="corner"></th>';
for (const c of columns) {
    html += `<th class="col-head${c === "C" ? " picked" : ""}">${c}</th>`;
}
html += '<th class="last"></th></tr></thead><tbody>';

for (let row = 1; row <= 39; row++) {
    const filled = row >= 2 && row <= 30;
    html += `<tr class="${filled ? "compact" : ""}"><th class="${filled ? "picked" : ""}">${row < 39 ? row : ""}</th>`;
    for (const c of columns) {
        if (row === 1 && titles[c]) {
            html += `<td class="title ${titles[c][1]}"><div>${titles[c][0]}</div></td>`;
        } else if (filled && c === "B") {
            html += `<td class="data name">${customers[row - 2]}</td>`;
        } else if (filled && (c === "C" || c === "D")) {
            html += '<td class="data"></td>';
        } else {
            html += "<td></td>";
        }
    }
    html += '<td class="last"></td></tr>';
}
sheet.innerHTML = html + "</tbody>";
```
